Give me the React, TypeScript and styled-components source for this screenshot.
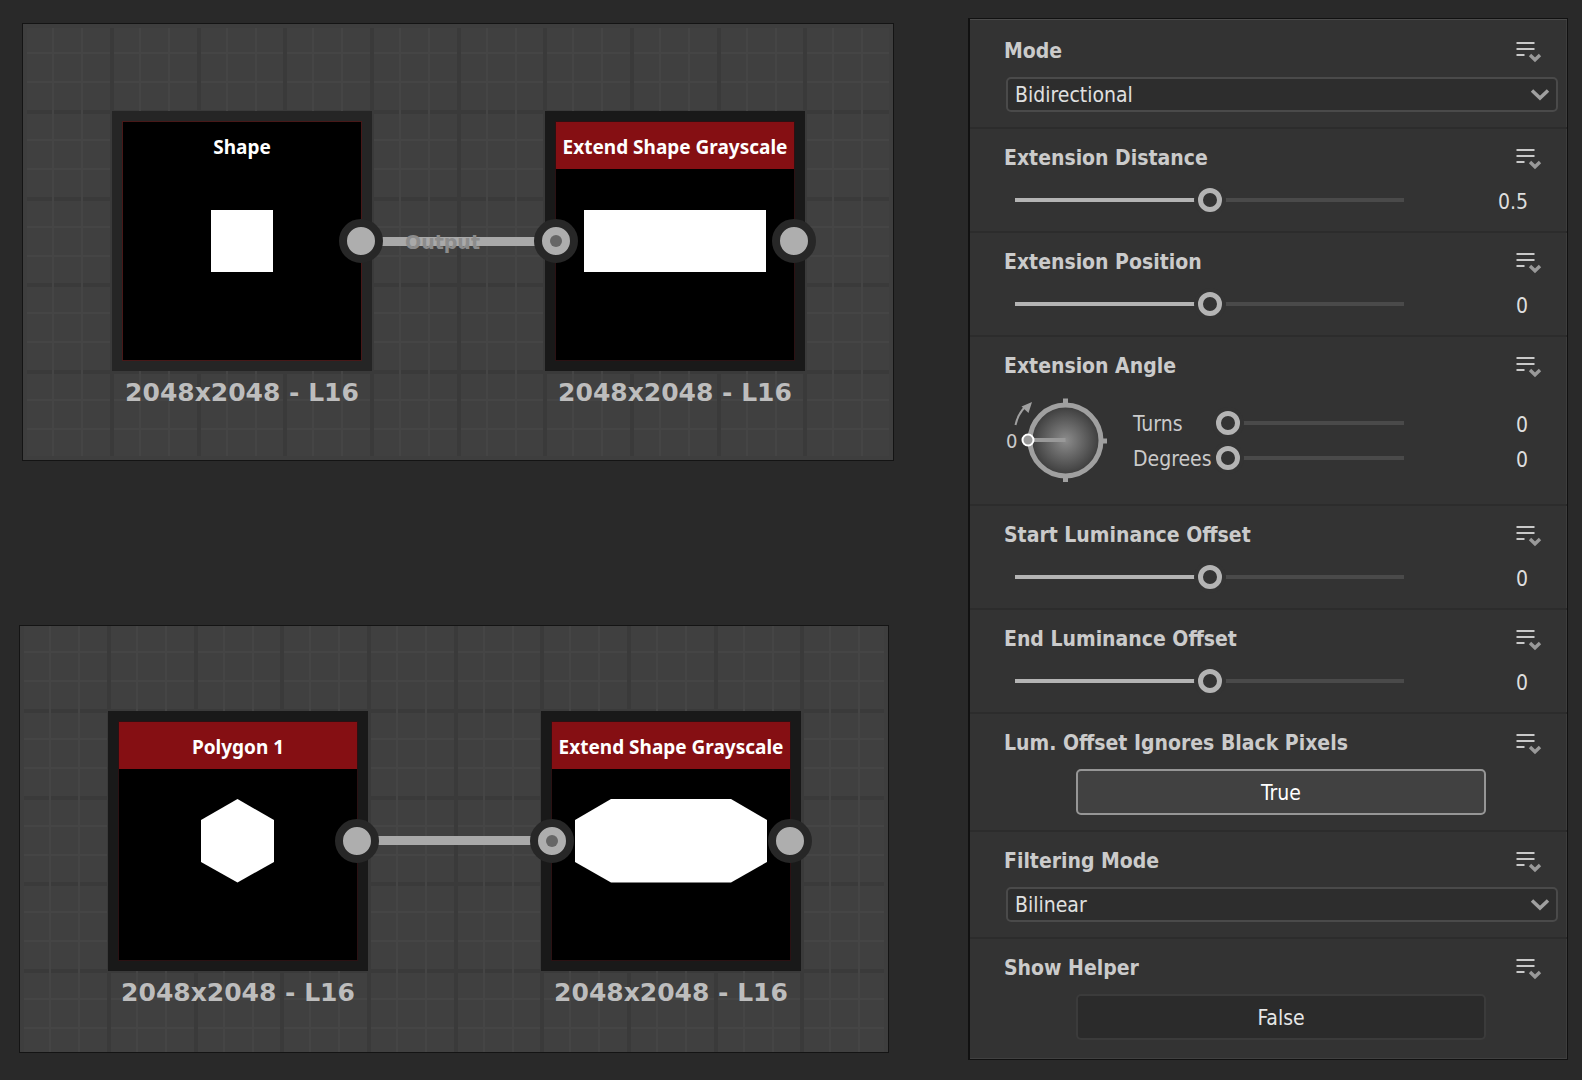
import React, { useId, useState } from 'react';
import styled, { createGlobalStyle } from 'styled-components';

const uiFont = '"DejaVu Sans Condensed", "DejaVu Sans", sans-serif';
const titleFont = '"Noto Sans", "Open Sans", sans-serif';
const captionFont = '"DejaVu Sans", sans-serif';

const GlobalStyle = createGlobalStyle`
  *, *::before, *::after { box-sizing: border-box; }
  body {
    margin: 0;
    background: #292929;
    color: #cbcbcb;
    font-family: ${uiFont};
    font-size: 21px;
    line-height: 24px;
  }
`;

const Page = styled.main`
  display: grid;
  grid-template-columns: minmax(0, 875fr) minmax(0, 600fr);
  column-gap: 74px;
  align-items: start;
  padding: 18px 14px 20px 19px;
`;

const GraphColumn = styled.div`
  display: flex;
  flex-direction: column;
  gap: 164px;
  padding-top: 5px;
`;

/* ---------- Node graph ---------- */

const Graph = styled.section<{ $height: number; $margin: string; $insetY: number; $phaseY: number }>`
  position: relative;
  height: ${(p) => p.$height}px;
  margin: ${(p) => p.$margin};
  background: #3e3e3e;
  border: 1px solid #141414;
  overflow: hidden;

  &::before {
    content: '';
    position: absolute;
    inset: ${(p) => p.$insetY}px 4px;
    background:
      repeating-linear-gradient(
        90deg,
        #3a3a3a 83px 87px,
        transparent 87px 112px,
        #454545 112px 114px,
        transparent 114px 141px,
        #454545 141px 143px,
        transparent 143px calc(83px + 260px / 3)
      ),
      repeating-linear-gradient(
        180deg,
        #3a3a3a ${(p) => p.$phaseY}px ${(p) => p.$phaseY + 4}px,
        #404040 ${(p) => p.$phaseY + 4}px ${(p) => p.$phaseY + 29}px,
        #454545 ${(p) => p.$phaseY + 29}px ${(p) => p.$phaseY + 31}px,
        #404040 ${(p) => p.$phaseY + 31}px ${(p) => p.$phaseY + 58}px,
        #454545 ${(p) => p.$phaseY + 58}px ${(p) => p.$phaseY + 60}px,
        #404040 ${(p) => p.$phaseY + 60}px calc(${(p) => p.$phaseY}px + 260px / 3)
      );
  }
`;

const NodeGroup = styled.article<{ $x: number; $y: number }>`
  position: absolute;
  left: ${(p) => p.$x}px;
  top: ${(p) => p.$y}px;
  width: 260px;
`;

const NodeFrame = styled.div<{ $soft?: boolean }>`
  position: relative;
  display: grid;
  grid-template: 238px / 238px;
  border: 11px solid ${(p) => (p.$soft ? '#252525' : '#191919')};
`;

const Preview = styled.svg<{ $soft?: boolean }>`
  grid-area: 1 / 1;
  display: block;
  background: #000;
  outline: 1px solid ${(p) => (p.$soft ? '#481818' : '#2b1113')};
  fill: #fff;
`;

const NodeTitle = styled.h2<{ $filled: boolean }>`
  grid-area: 1 / 1;
  z-index: 1;
  align-self: start;
  height: 47px;
  margin: 0;
  padding-top: 4px;
  background: ${(p) => (p.$filled ? '#850f13' : 'transparent')};
  color: #fff;
  font: bold 19px/43px ${titleFont};
  text-align: center;
  white-space: nowrap;
`;

const Port = styled.span<{ $side: 'left' | 'right' }>`
  position: absolute;
  z-index: 2;
  top: 97px;
  ${(p) => p.$side}: -22px;
  display: grid;
  place-items: center;
  width: 44px;
  height: 44px;
  border: 8px solid #272727;
  border-radius: 50%;
  background: #aeaeae;

  &::after {
    content: '';
    width: 12px;
    height: 12px;
    border-radius: 50%;
    background: ${(p) => (p.$side === 'left' ? '#666' : 'transparent')};
  }
`;

const Caption = styled.p`
  margin: 7px 0 0;
  color: #bdbdbd;
  font: bold 25px/30px ${captionFont};
  text-align: center;
  white-space: nowrap;
`;

const Wire = styled.div<{ $x: number; $y: number }>`
  position: absolute;
  left: ${(p) => p.$x}px;
  top: ${(p) => p.$y}px;
  display: flex;
  align-items: center;
  width: 195px;
  height: 9px;
  padding-left: 44px;
  background: #a9a9a9;
  color: #8c8c8c;
  font: bold 19px/24px ${captionFont};
`;

type NodeProps = {
  x: number;
  y: number;
  title: string;
  plain?: boolean;
  input?: boolean;
  children: React.ReactNode;
};

function GraphNode({ x, y, title, plain, input, children }: NodeProps) {
  return (
    <NodeGroup $x={x} $y={y}>
      <NodeFrame $soft={plain}>
        <Preview $soft={plain} viewBox="0 0 238 238" aria-hidden="true">
          {children}
        </Preview>
        <NodeTitle $filled={!plain}>{title}</NodeTitle>
        {input && <Port $side="left" />}
        <Port $side="right" />
      </NodeFrame>
      <Caption>2048x2048 - L16</Caption>
    </NodeGroup>
  );
}

/* ---------- Properties panel ---------- */

const Panel = styled.aside`
  padding: 3px 0 4px;
  background: #333;
  border: 1px solid #111;
  border-left-width: 2px;
  box-shadow: inset 0 1px #4b4b4b, inset 0 -1px #414141, inset -1px 0 #3d3d3d;
`;

const Section = styled.section`
  display: flex;
  flex-direction: column;
  gap: 14px;
  padding: 17px 9px 15px 33px;

  &:not(:last-child) {
    border-bottom: 2px solid #2c2c2c;
  }
`;

const SectionHeader = styled.header`
  display: flex;
  align-items: center;
  justify-content: space-between;
  padding: 0 16px 0 1px;
`;

const SectionLabel = styled.label`
  font-weight: bold;
  white-space: nowrap;
`;

const MenuButton = styled.button`
  display: block;
  height: 24px;
  padding: 0;
  border: 0;
  background: none;
  cursor: pointer;
`;

const MenuSvg = styled.svg`
  display: block;
  width: 26px;
  height: 24px;
`;

const SelectBox = styled.div`
  display: grid;
  align-items: center;
  margin-left: 3px;
`;

const Select = styled.select`
  grid-area: 1 / 1;
  appearance: none;
  width: 100%;
  height: 35px;
  padding: 1px 36px 0 7px;
  border: 2px solid #4a4a4a;
  border-radius: 5px;
  background: #2d2d2d;
  color: #e0e0e0;
  font: 21px/24px ${uiFont};
`;

const SelectArrow = styled.svg`
  grid-area: 1 / 1;
  justify-self: end;
  width: 20px;
  height: 12px;
  margin-right: 8px;
  pointer-events: none;
`;

const ControlRow = styled.div<{ $height: number }>`
  display: flex;
  align-items: center;
  height: ${(p) => p.$height}px;
`;

const SliderRow = styled(ControlRow)`
  padding: 0 30px 0 12px;
`;

const Range = styled.input<{ $fill: number }>`
  flex: 1;
  appearance: none;
  min-width: 0;
  height: 24px;
  margin: 0;
  background: linear-gradient(90deg, #b4b4b4 ${(p) => p.$fill}%, #4a4a4a ${(p) => p.$fill}%)
    center / 100% 4px no-repeat;

  &::-webkit-slider-thumb {
    appearance: none;
    width: 24px;
    height: 24px;
    border: 5px solid #b4b4b4;
    border-radius: 50%;
    background: #333;
    box-shadow: 0 0 0 4px #333;
  }
`;

const Value = styled.output`
  width: 124px;
  padding-top: 3px;
  color: #dedede;
  text-align: right;
`;

const AngleArea = styled.div`
  display: flex;
  align-items: center;
  gap: 24px;
  padding-right: 30px;
`;

const DialSvg = styled.svg`
  flex: none;
  display: block;
  width: 106px;
  height: 97px;
`;

const DialText = styled.text`
  fill: #cbcbcb;
  font: 20px ${uiFont};
`;

const AngleSliders = styled.div`
  flex: 1;
  min-width: 0;
`;

const AngleLabel = styled.label`
  width: 83px;
  padding-top: 2px;
`;

const Toggle = styled.button<{ $on: boolean }>`
  height: 46px;
  margin: 0 72px 0 73px;
  padding: 1px 0 0;
  border: 2px solid ${(p) => (p.$on ? '#969696' : '#3b3b3b')};
  border-radius: 5px;
  background: ${(p) => (p.$on ? '#414141' : '#2b2b2b')};
  color: ${(p) => (p.$on ? '#fff' : '#e6e6e6')};
  font: 21px/24px ${uiFont};
  cursor: pointer;
`;

function Header({ label, htmlFor }: { label: string; htmlFor: string }) {
  return (
    <SectionHeader>
      <SectionLabel htmlFor={htmlFor}>{label}</SectionLabel>
      <MenuButton type="button" aria-label={`${label} options`}>
        <MenuSvg viewBox="0 0 26 24" aria-hidden="true">
          <path d="M0.5 4h18M0.5 10h18M0.5 16h8" stroke="#c9c9c9" strokeWidth="2" />
          <path d="M14 16l5 4.8 5-4.8" fill="none" stroke="#999" strokeWidth="3.4" />
        </MenuSvg>
      </MenuButton>
    </SectionHeader>
  );
}

function SelectSection({ label, options }: { label: string; options: string[] }) {
  const id = useId();
  return (
    <Section>
      <Header label={label} htmlFor={id} />
      <SelectBox>
        <Select id={id} defaultValue={options[0]}>
          {options.map((o) => (
            <option key={o}>{o}</option>
          ))}
        </Select>
        <SelectArrow viewBox="0 0 20 12" aria-hidden="true">
          <path d="M2 1.5l8 7.5 8-7.5" fill="none" stroke="#a0a0a0" strokeWidth="3.5" />
        </SelectArrow>
      </SelectBox>
    </Section>
  );
}

type SliderProps = { id: string; min: number; max: number; initial: number };

function Slider({ id, min, max, initial }: SliderProps) {
  const [value, setValue] = useState(initial);
  return (
    <>
      <Range
        id={id}
        type="range"
        min={min}
        max={max}
        step="any"
        value={value}
        $fill={((value - min) / (max - min)) * 100}
        onChange={(e) => setValue(Number(e.target.value))}
      />
      <Value htmlFor={id}>{Math.round(value * 100) / 100}</Value>
    </>
  );
}

function SliderSection({ label, min, max, initial }: { label: string } & Omit<SliderProps, 'id'>) {
  const id = useId();
  return (
    <Section>
      <Header label={label} htmlFor={id} />
      <SliderRow $height={32}>
        <Slider id={id} min={min} max={max} initial={initial} />
      </SliderRow>
    </Section>
  );
}

function Dial() {
  return (
    <DialSvg viewBox="0 0 106 97">
      <defs>
        <radialGradient id="dialShade">
          <stop offset="0" stopColor="#8c8c8c" />
          <stop offset="1" stopColor="#3a3a3a" />
        </radialGradient>
      </defs>
      <path d="M62.5 6.5v8M62.5 82v8M96 49h8" stroke="#a0a0a0" strokeWidth="5" />
      <circle cx="62.5" cy="48.5" r="35.5" fill="url(#dialShade)" stroke="#a0a0a0" strokeWidth="5" />
      <path d="M62.5 48H30" stroke="#999" strokeWidth="4" />
      <circle cx="25" cy="48" r="5.5" fill="#999" stroke="#fff" strokeWidth="2" />
      <path d="M12.5 33C14 26 17 20 22 15" fill="none" stroke="#a0a0a0" strokeWidth="2" />
      <path d="M29 10L18.5 14.5L25.5 21Z" fill="#a0a0a0" />
      <DialText x="3" y="56">0</DialText>
    </DialSvg>
  );
}

function AngleSection() {
  const id = useId();
  return (
    <Section>
      <Header label="Extension Angle" htmlFor={`${id}turns`} />
      <AngleArea>
        <Dial />
        <AngleSliders>
          <ControlRow $height={35}>
            <AngleLabel htmlFor={`${id}turns`}>Turns</AngleLabel>
            <Slider id={`${id}turns`} min={0} max={10} initial={0} />
          </ControlRow>
          <ControlRow $height={35}>
            <AngleLabel htmlFor={`${id}degrees`}>Degrees</AngleLabel>
            <Slider id={`${id}degrees`} min={0} max={360} initial={0} />
          </ControlRow>
        </AngleSliders>
      </AngleArea>
    </Section>
  );
}

function ToggleSection({ label, initial }: { label: string; initial: boolean }) {
  const id = useId();
  const [on, setOn] = useState(initial);
  return (
    <Section>
      <Header label={label} htmlFor={id} />
      <Toggle id={id} type="button" aria-pressed={on} $on={on} onClick={() => setOn(!on)}>
        {on ? 'True' : 'False'}
      </Toggle>
    </Section>
  );
}

export default function App() {
  return (
    <>
      <GlobalStyle />
      <Page>
        <GraphColumn>
          <Graph $height={438} $margin="0 0 0 3px" $insetY={4} $phaseY={82}>
            <Wire $x={338} $y={213}>Output</Wire>
            <GraphNode x={89} y={87} title="Shape" plain>
              <rect x="88" y="88" width="62" height="62" />
            </GraphNode>
            <GraphNode x={522} y={87} title="Extend Shape Grayscale" input>
              <rect x="28" y="88" width="182" height="62" />
            </GraphNode>
          </Graph>
          <Graph $height={428} $margin="0 5px 0 0" $insetY={0} $phaseY={83}>
            <Wire $x={337} $y={210} />
            <GraphNode x={88} y={85} title="Polygon 1">
              <path d="M118.5 77L155 98V140L118.5 160.5L82 140V98Z" />
            </GraphNode>
            <GraphNode x={521} y={85} title="Extend Shape Grayscale" input>
              <path d="M59 77H179L215 98V140L179 160.5H59L23 140V98Z" />
            </GraphNode>
          </Graph>
        </GraphColumn>
        <Panel>
          <SelectSection label="Mode" options={['Bidirectional']} />
          <SliderSection label="Extension Distance" min={0} max={1} initial={0.5} />
          <SliderSection label="Extension Position" min={-1} max={1} initial={0} />
          <AngleSection />
          <SliderSection label="Start Luminance Offset" min={-1} max={1} initial={0} />
          <SliderSection label="End Luminance Offset" min={-1} max={1} initial={0} />
          <ToggleSection label="Lum. Offset Ignores Black Pixels" initial />
          <SelectSection label="Filtering Mode" options={['Bilinear']} />
          <ToggleSection label="Show Helper" initial={false} />
        </Panel>
      </Page>
    </>
  );
}
